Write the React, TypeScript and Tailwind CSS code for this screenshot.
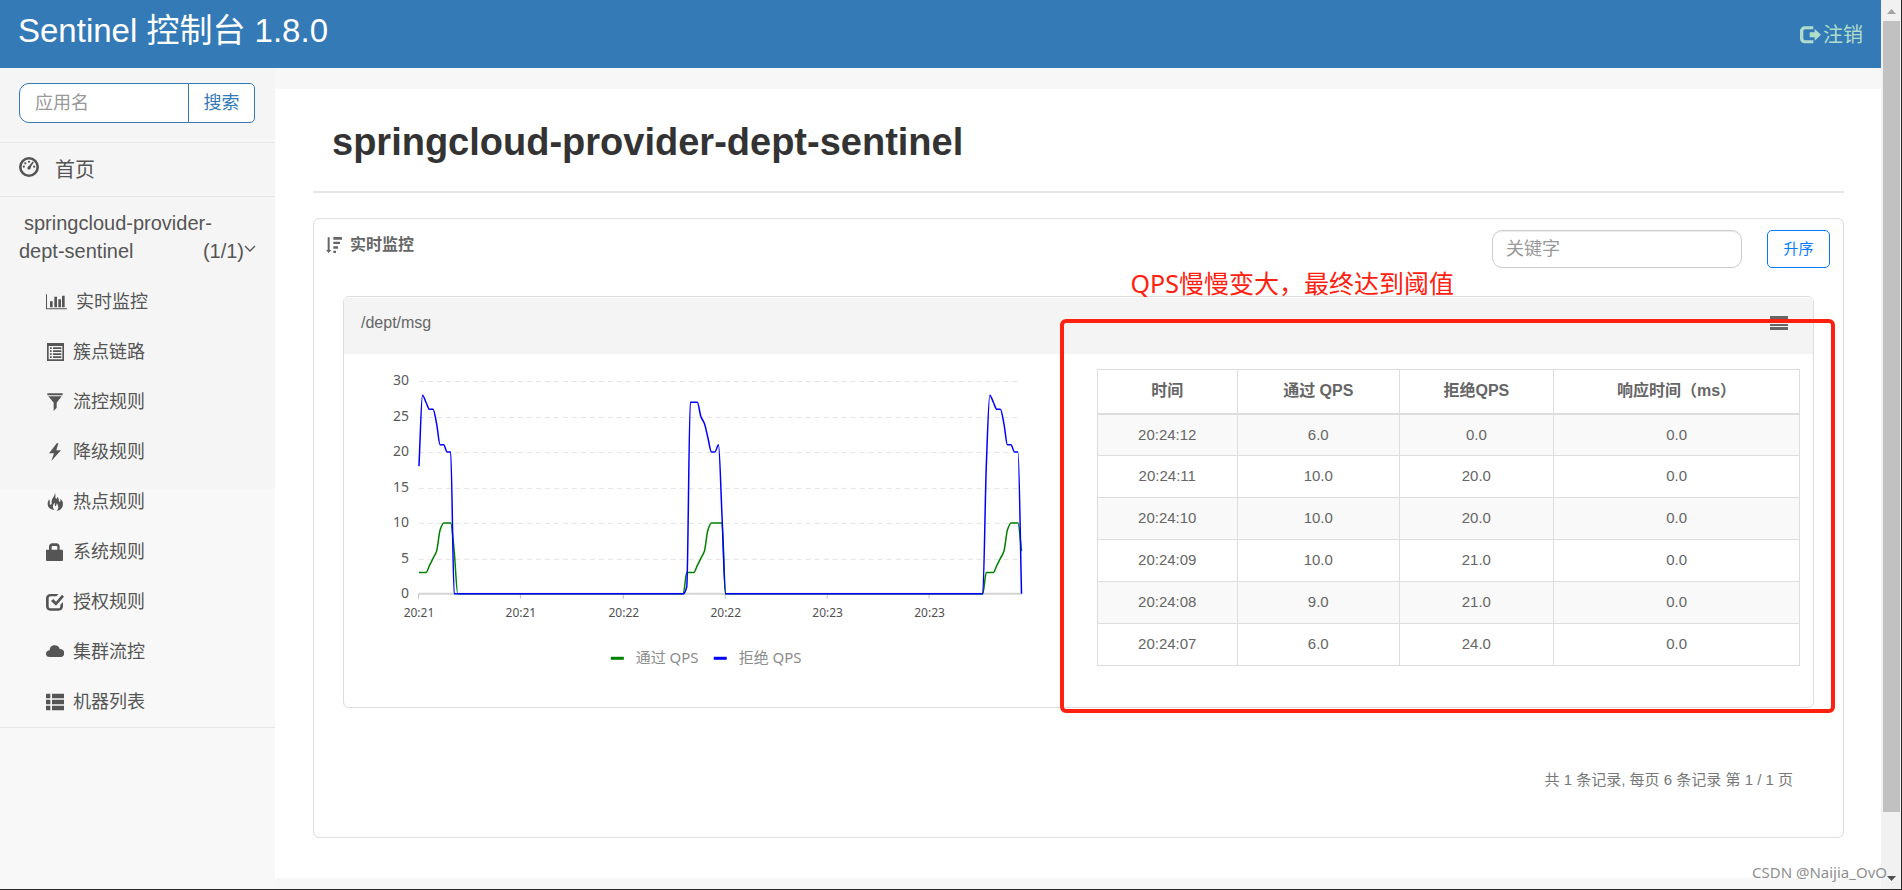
import type { ReactNode } from "react";

const PASS = "#008000";
const BLOCK = "#0000ff";

/* ---------- icons ---------- */

function Glyph({ children, size = "size-[18px]" }: { children: ReactNode; size?: string }) {
  return (
    <svg viewBox="0 0 54 54" className={`${size} shrink-0`} fill="currentColor" aria-hidden="true">
      {children}
    </svg>
  );
}

const StatsIcon = () => (
  <svg viewBox="0 0 63 54" className="h-[18px] w-[21px] shrink-0" fill="currentColor" aria-hidden="true">
    <path d="M0 4h3v42h60v3H0zM12 25h8v18h-8zM25 11h8v32h-8zM37 19h8v24h-8zM48 8h8v35h-8z" />
  </svg>
);
const ListAltIcon = () => (
  <Glyph>
    <path fillRule="evenodd" d="M3 0h51v54H3zM8 9v40h41V9z" />
    <path d="M12 13h5v5h-5zM21 13h25v5H21zM12 22h5v5h-5zM21 22h25v5H21zM12 31h5v5h-5zM21 31h25v5H21zM12 40h5v5h-5zM21 40h25v5H21z" />
  </Glyph>
);
const FilterIcon = () => (
  <Glyph>
    <path d="M4 1h46v6H4zM7 10h40L32 29v15l-9 10V29z" />
  </Glyph>
);
const FlashIcon = () => (
  <Glyph>
    <path d="M33 0 9 31h15L16 54 45 22H31L37 1z" />
  </Glyph>
);
const FireIcon = () => (
  <Glyph>
    <path d="M27 0c3 7 0 12 2 16 2 3 5 1 4-5 8 6 4 12 7 15 3 2 4-3 3-9 8 6 9 15 7 22-2 8-8 13-18 15 6-7 7-14 0-23 0 5-2 8-4 9-2-3-2-6-1-11-7 5-9 13-2 22C13 49 5 43 5 32c0-6 3-8 4-13 3 4 3 9 2 14 1 4 6 3 6-2C15 16 26 12 27 0z" />
  </Glyph>
);
const LockIcon = () => (
  <Glyph>
    <path fillRule="evenodd" d="M0 20h9v-9C9 5 13 1 19 1h12c6 0 10 4 10 10v9h7q3 0 3 3v28q0 3-3 3H3q-3 0-3-3V20zM17 20h17v-8q0-3-3-3H20q-3 0-3 3z" />
  </Glyph>
);
const CheckIcon = () => (
  <Glyph>
    <path d="M38 3H14C5 3 0 8 0 16v24c0 8 5 13 13 13h25c8 0 13-5 13-13V27l-8 8v4c0 5-2 7-6 7H15c-5 0-7-2-7-7V17c0-5 2-7 7-7h16z" />
    <path d="m15 24 7-6 8 8L48 5l6 6-24 27z" />
  </Glyph>
);
const CloudIcon = () => (
  <Glyph>
    <path d="M11 42C4 42 0 38 0 32s5-10 11-10C11 12 17 7 26 7c8 0 13 4 15 11 8-1 14 5 14 12S50 42 43 42z" />
  </Glyph>
);
const ThListIcon = () => (
  <Glyph>
    <path d="M2 2h11v14H0V4zM18 2h38v14H18zM0 20h13v14H0zM18 20h38v14H18zM0 38h13v14H2l-2-2zM18 38h38v14H18z" />
  </Glyph>
);
const DashboardIcon = () => (
  <Glyph size="size-5">
    <path fillRule="evenodd" d="M27 0a27 27 0 1 1 0 54 27 27 0 0 1 0-54zm0 7a20 20 0 1 0 0 40 20 20 0 0 0 0-40z" />
    <circle cx="27" cy="13" r="3" />
    <circle cx="17" cy="17" r="3" />
    <circle cx="13" cy="26" r="3" />
    <circle cx="41" cy="26" r="3" />
    <path d="m37 12 3 2-8 13c1 4-2 7-5 7-4 0-6-5-3-8l4-3z" />
  </Glyph>
);
const LogoutIcon = () => (
  <svg viewBox="0 0 63 54" className="h-[18px] w-[21px] shrink-0" fill="currentColor" aria-hidden="true">
    <path d="M40 1H16C6 1 0 7 0 17v19c0 10 6 16 16 16h24v-9H17c-5 0-7-2-7-7V17c0-5 2-7 7-7h23z" />
    <path d="M44 9v10H29v15h15v10l19-18z" />
  </svg>
);
const SortIcon = () => (
  <svg viewBox="0 0 48 54" className="h-[18px] w-4 shrink-0" fill="currentColor" aria-hidden="true">
    <path d="M5 4h6v38h5l-8 9-8-9h5zM22 3h26v8H22zM22 17h20v7H22zM22 31h14v7H22zM22 44h8v7h-8z" />
  </svg>
);

/* ---------- chart ---------- */

const burst = { pass: [3, 3, 3, 4, 5, 6, 9, 10, 10, 10, 6], block: [18, 28, 27, 26, 26, 24, 21, 21, 20, 20, 0] };
const middle = { pass: [3, 3, 3, 4, 5, 6, 9, 10, 10, 10, 10], block: [1, 27, 27, 27, 25, 24, 22, 20, 20, 21, 11] };

function series(key: "pass" | "block"): number[] {
  const values: number[] = new Array(172).fill(0);
  burst[key].forEach((v, i) => {
    values[i] = v;
    values[161 + i] = v;
  });
  middle[key].forEach((v, i) => {
    values[76 + i] = v;
  });
  return values;
}

const X0 = 75;
const Y0 = 240;
const STEP = 603 / 171;
const UNIT = 213 / 30;

function monotonePath(values: number[]): string {
  const slopes = values.slice(1).map((v, i) => v - values[i]);
  const tangents = values.map((_, i) => {
    if (i === 0) return slopes[0];
    if (i === values.length - 1) return slopes[i - 1];
    const a = slopes[i - 1];
    const b = slopes[i];
    return a * b <= 0 ? 0 : (2 * a * b) / (a + b);
  });
  const px = (i: number) => (X0 + i * STEP).toFixed(2);
  const py = (v: number) => (Y0 - v * UNIT).toFixed(2);
  let d = `M${px(0)} ${py(values[0])}`;
  for (let i = 1; i < values.length; i++) {
    d += `C${px(i - 2 / 3)} ${py(values[i - 1] + tangents[i - 1] / 3)} ${px(i - 1 / 3)} ${py(values[i] - tangents[i] / 3)} ${px(i)} ${py(values[i])}`;
  }
  return d;
}

const ticks = ["20:21", "20:21", "20:22", "20:22", "20:23", "20:23"];

function QpsChart() {
  return (
    <svg viewBox="0 0 735 352" className="h-auto w-full font-['Noto_Sans','Noto_Sans_CJK_SC',sans-serif]" role="img" aria-label="QPS">
      {[30, 25, 20, 15, 10, 5, 0].map((v) => (
        <g key={v}>
          {v > 0 && (
            <line x1={X0} x2={X0 + 603} y1={Math.round(Y0 - v * UNIT) + 0.5} y2={Math.round(Y0 - v * UNIT) + 0.5} stroke="#e3e3e3" strokeDasharray="5 4" />
          )}
          <text x={65} y={Math.round(Y0 - v * UNIT) + 4} textAnchor="end" className="fill-[#595959] text-[14px]">
            {v}
          </text>
        </g>
      ))}
      <line x1={X0} x2={X0 + 603} y1={Y0} y2={Y0} stroke="#d4d4d4" strokeWidth={2} />
      {ticks.map((t, i) => {
        const x = Math.round(X0 + i * 29 * STEP);
        return (
          <g key={i}>
            <line x1={x - 0.5} x2={x - 0.5} y1={Y0} y2={Y0 + 5} stroke="#bfbfbf" />
            <text x={x} y={263} textAnchor="middle" className="fill-[#505050] text-[12px]">
              {t}
            </text>
          </g>
        );
      })}
      <path d={monotonePath(series("pass"))} fill="none" stroke={PASS} strokeWidth={1.5} />
      <path d={monotonePath(series("block"))} fill="none" stroke={BLOCK} strokeWidth={1.5} />
      <rect x={267} y={303} width={13} height={3} fill={PASS} />
      <text x={292} y={309} className="fill-[#8c8c8c] text-[15px]">通过 QPS</text>
      <rect x={370} y={303} width={13} height={3} fill={BLOCK} />
      <text x={395} y={309} className="fill-[#8c8c8c] text-[15px]">拒绝 QPS</text>
    </svg>
  );
}

/* ---------- page ---------- */

const menu = [
  { label: "实时监控", Icon: StatsIcon },
  { label: "簇点链路", Icon: ListAltIcon },
  { label: "流控规则", Icon: FilterIcon },
  { label: "降级规则", Icon: FlashIcon },
  { label: "热点规则", Icon: FireIcon },
  { label: "系统规则", Icon: LockIcon },
  { label: "授权规则", Icon: CheckIcon },
  { label: "集群流控", Icon: CloudIcon },
  { label: "机器列表", Icon: ThListIcon },
];

const rows = [
  ["20:24:12", "6.0", "0.0", "0.0"],
  ["20:24:11", "10.0", "20.0", "0.0"],
  ["20:24:10", "10.0", "20.0", "0.0"],
  ["20:24:09", "10.0", "21.0", "0.0"],
  ["20:24:08", "9.0", "21.0", "0.0"],
  ["20:24:07", "6.0", "24.0", "0.0"],
];

function Sidebar() {
  return (
    <aside className="w-[275px] shrink-0 bg-[linear-gradient(#f5f5f5_421px,#f8f8f8_421px)] text-[#555]">
      <form className="flex border-b border-[#e7e7e7] pt-[15px] pr-5 pb-[19px] pl-[19px]">
        <input
          type="text"
          aria-label="应用名"
          placeholder="应用名"
          className="h-10 min-w-0 flex-1 rounded-l-[10px] border border-[#337ab7] bg-white px-[15px] text-[18px] placeholder:text-[#999]"
        />
        <button type="button" className="-ml-px h-10 w-[67px] rounded-r-[5px] border border-[#337ab7] bg-white text-[18px] text-[#337ab7]">
          搜索
        </button>
      </form>
      <nav>
        <a href="#home" className="flex h-[54px] items-center gap-4 border-b border-[#e7e7e7] px-[19px] pb-1.5 text-[20px]">
          <DashboardIcon />
          <span className="pt-1.5">首页</span>
        </a>
        <a href="#app" className="block px-[19px] pt-3 pb-3 indent-[5px] text-[20px] leading-7">
          springcloud-provider-dept-sentinel
          <span className="float-right flex indent-0">
            (1/1)
            <svg viewBox="0 0 12 8" className="mt-2 h-2 w-3" fill="none" stroke="currentColor" strokeWidth="1.4" aria-hidden="true">
              <path d="m1 1 5 5 5-5" />
            </svg>
          </span>
        </a>
        <ul className="border-b border-[#e7e7e7]">
          {menu.map(({ label, Icon }) => (
            <li key={label}>
              <a href={`#${label}`} className="flex h-[50px] items-center gap-[9px] pl-[46px] text-[18px]">
                <Icon />
                {label}
              </a>
            </li>
          ))}
        </ul>
      </nav>
    </aside>
  );
}

function MetricTable() {
  return (
    <table className="w-full table-fixed border-collapse text-center text-[#666]">
      <colgroup>
        <col className="w-[20%]" />
        <col className="w-[23%]" />
        <col className="w-[22%]" />
        <col className="w-[35%]" />
      </colgroup>
      <thead>
        <tr className="h-11 text-[16px]">
          {["时间", "通过 QPS", "拒绝QPS", "响应时间（ms）"].map((h) => (
            <th key={h} className="border border-b-2 border-[#ddd] font-bold">
              {h}
            </th>
          ))}
        </tr>
      </thead>
      <tbody>
        {rows.map((r) => (
          <tr key={r[0]} className="h-[42px] text-[15px] odd:bg-[#f9f9f9]">
            {r.map((c, i) => (
              <td key={i} className="border border-[#ddd]">
                {c}
              </td>
            ))}
          </tr>
        ))}
      </tbody>
    </table>
  );
}

function Scrollbar() {
  return (
    <div className="flex w-5 shrink-0 flex-col bg-[#f1f1f1] pr-px pl-0.5" aria-hidden="true">
      <svg viewBox="0 0 17 21" className="h-[21px] w-[17px]" fill="#a3a3a3">
        <path d="M4 14h9L8.5 9z" />
      </svg>
      <div className="grow-[791] bg-[#c1c1c1]" />
      <div className="grow-[57]" />
      <svg viewBox="0 0 17 20" className="h-5 w-[17px]" fill="#505050">
        <path d="M4 7h9l-4.5 5z" />
      </svg>
    </div>
  );
}

export default function App() {
  return (
    <div className="relative flex min-h-screen border-r border-b border-[#2a2a2a] bg-[#f7f7f7] font-['Liberation_Sans','Noto_Sans_CJK_SC',sans-serif]">
      <div className="flex min-w-0 flex-1 flex-col">
        <header className="flex h-[68px] items-center justify-between bg-[#337ab7] px-[18px]">
          <span className="pb-1.5 text-[33px] leading-10 text-white">Sentinel 控制台 1.8.0</span>
          <a href="#logout" className="flex items-center gap-0.5 pt-0.5 text-[20px] text-[#b0ddcb]">
            <LogoutIcon />
            注销
          </a>
        </header>
        <div className="flex flex-1">
          <Sidebar />
          <main className="mt-[21px] mb-[11px] min-w-0 flex-1 bg-white pr-[37px] pb-10 pl-[38px]">
            <h1 className="border-b-2 border-[#e5e5e5] pt-[29px] pb-[25px] pl-[19px] text-[38px] leading-[48px] font-bold text-[#333]">
              springcloud-provider-dept-sentinel
            </h1>
            <section className="mt-[25px] rounded-md border border-[#ddd]">
              <div className="flex items-start justify-between pr-[13px] pl-3 text-[#666]">
                <h2 className="flex items-center gap-2 pt-[14px] text-[16px] font-bold">
                  <SortIcon />
                  实时监控
                </h2>
                <div className="flex items-center gap-[25px] pt-[11px]">
                  <input
                    type="text"
                    aria-label="关键字"
                    placeholder="关键字"
                    className="h-[38px] w-[250px] rounded-[10px] border border-[#ccc] px-[13px] text-[18px] shadow-[inset_0_1px_1px_rgba(0,0,0,0.075)] placeholder:text-[#999]"
                  />
                  <button type="button" className="h-[38px] w-[63px] rounded-[5px] border border-[#007bff] text-[15px] text-[#007bff]">
                    升序
                  </button>
                </div>
              </div>
              <div className="relative mx-[29px] mt-7 rounded-md border border-[#ddd] pt-px pb-px">
                <div className="flex h-14 items-center justify-between bg-[#f4f4f4] pr-[25px] pb-1.5 pl-[17px] text-[16px] text-[#666]">
                  /dept/msg
                  <button type="button" aria-label="menu">
                    <svg viewBox="0 0 18 14" className="h-3.5 w-[18px]" fill="#666" aria-hidden="true">
                      <path d="M0 0h18v3H0zM0 4h18v2H0zM0 8h18v2H0zM0 11h18v3H0z" />
                    </svg>
                  </button>
                </div>
                <div className="grid grid-cols-2">
                  <QpsChart />
                  <div className="pt-[15px] pr-[13px] pl-[18px]">
                    <MetricTable />
                  </div>
                </div>
                <div className="pointer-events-none absolute top-[22px] -right-[22px] -bottom-[6px] left-[calc(50%-19px)] rounded-md border-4 border-[#ff2010]">
                  <p className="absolute -top-[58px] left-[67px] font-['Noto_Sans','Noto_Sans_CJK_SC',sans-serif] text-[25px] leading-[36px] whitespace-nowrap text-[#ff2010]">
                    QPS慢慢变大，最终达到阈值
                  </p>
                </div>
              </div>
              <p className="pt-[60px] pr-[50px] pb-[45px] text-right text-[15px] leading-6 text-[#777]">
                共 1 条记录, 每页 6 条记录 第 1 / 1 页
              </p>
            </section>
          </main>
        </div>
      </div>
      <Scrollbar />
      <span className="absolute right-3.5 bottom-1.5 font-['Noto_Sans',sans-serif] text-[15px] text-[#8f8f8f]">CSDN @Naijia_OvO</span>
    </div>
  );
}
